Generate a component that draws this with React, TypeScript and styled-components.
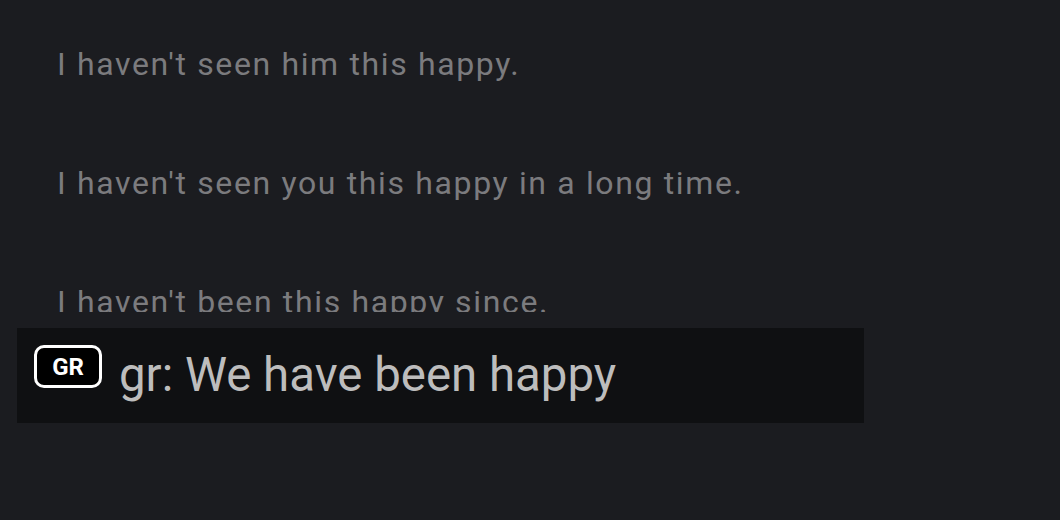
import React from "react";
import styled, { createGlobalStyle } from "styled-components";

const Global = createGlobalStyle`
  html, body { margin: 0; padding: 0; background: #1b1c20; }
  body { font-family: Roboto, "Noto Sans", "Liberation Sans", sans-serif; }
`;

const Page = styled.div`
  width: 1060px;
  height: 520px;
  background: #1b1c20;
  display: flex;
  flex-direction: column;
  overflow: hidden;
`;

const List = styled.div`
  height: 312px;
  overflow: hidden;
  box-sizing: border-box;
  padding: 46px 0 0 57px;
  display: flex;
  flex-direction: column;
  gap: 83px;
  flex-shrink: 0;
`;

const Line = styled.div`
  font-size: 32px;
  line-height: 36px;
  color: #7b7b7e;
  letter-spacing: 1.64px;
  white-space: nowrap;
`;

const Caption = styled.div`
  margin: 16px 0 0 17px;
  width: 847px;
  height: 95px;
  box-sizing: border-box;
  padding: 17px 17px;
  background: #0f1012;
  display: flex;
  align-items: flex-start;
  gap: 17px;
  flex-shrink: 0;
`;

const Badge = styled.div`
  width: 68px;
  height: 43px;
  box-sizing: border-box;
  border: 3px solid #ffffff;
  border-radius: 10px;
  background: #000000;
  color: #ffffff;
  font-weight: 700;
  font-size: 24px;
  line-height: 1;
  display: flex;
  align-items: center;
  justify-content: center;
  flex-shrink: 0;
`;

const CaptionText = styled.div`
  margin-top: 7px;
  font-size: 47.4px;
  line-height: 47px;
  color: #bdbdbd;
  white-space: nowrap;
`;

const lines = [
  "I haven't seen him this happy.",
  "I haven't seen you this happy in a long time.",
  "I haven't been this happy since.",
];

export default function App() {
  return (
    <Page>
      <Global />
      <List>
        {lines.map((l) => (
          <Line key={l}>{l}</Line>
        ))}
      </List>
      <Caption>
        <Badge>GR</Badge>
        <CaptionText>gr: We have been happy</CaptionText>
      </Caption>
    </Page>
  );
}
